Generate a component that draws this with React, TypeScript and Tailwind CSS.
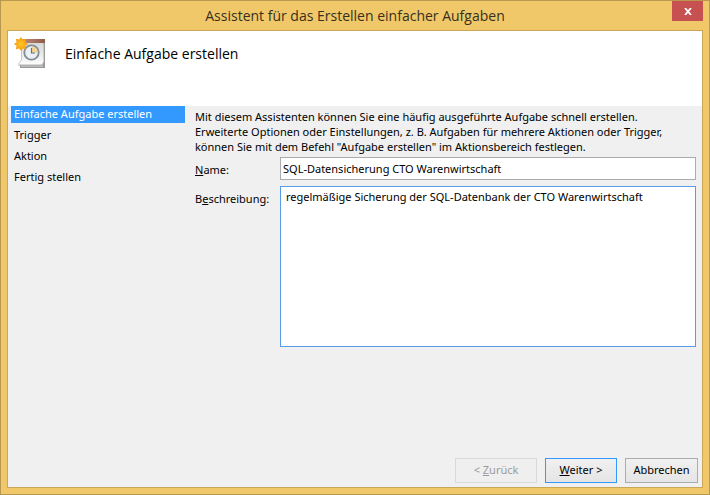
import React from "react";

const steps = ["Einfache Aufgabe erstellen", "Trigger", "Aktion", "Fertig stellen"];

function TaskIcon() {
  return (
    <svg width="32" height="32" viewBox="0 0 32 32" aria-hidden="true">
      <defs>
        <linearGradient id="sheet" x1="0" y1="0" x2="0" y2="1">
          <stop offset="0" stopColor="#d6d6d4" />
          <stop offset="0.6" stopColor="#ececeb" />
          <stop offset="1" stopColor="#ffffff" />
        </linearGradient>
        <linearGradient id="bar" x1="0" y1="0" x2="1" y2="0">
          <stop offset="0" stopColor="#c08d7b" />
          <stop offset="1" stopColor="#8f5a49" />
        </linearGradient>
        <radialGradient id="star">
          <stop offset="0" stopColor="#ffc928" />
          <stop offset="1" stopColor="#f5980c" />
        </radialGradient>
      </defs>
      <path d="M6 26H29V6H31V31H6Z" fill="#999999" />
      <path d="M7 27H29V30H7Z" fill="#bdbdbd" />
      <path d="M8 5H30V25L28 28H4L7 24Z" fill="url(#sheet)" />
      <path d="M4 28H28L30 25V6" fill="none" stroke="#a0a0a0" strokeWidth="0.800" />
      <path d="M4.500 27L7.500 23V12" fill="none" stroke="#bcbcbc" strokeWidth="0.800" />
      <path d="M8 2H31V6H8Z" fill="url(#bar)" />
      <circle cx="17.500" cy="15.500" r="7.200" fill="#edf1f4" stroke="#858d94" strokeWidth="1.800" />
      <path d="M17.500 15.500V9.500A6 6 0 0 1 23.500 15.500Z" fill="#f8d488" />
      <circle cx="17.500" cy="15.500" r="5.700" fill="none" stroke="#c9d1d7" strokeWidth="0.700" strokeDasharray="1 2" />
      <path d="M17.500 11V16H21" fill="none" stroke="#5f7488" strokeWidth="1.200" />
      <path
        d="M7 0L8.700 2.600L12.200 1.800L11.400 5.200L14 7L11.400 8.800L12.200 12.200L8.800 11.400L7 14L5.200 11.400L1.800 12.200L2.600 8.800L0 7L2.600 5.200L1.800 1.800L5.200 2.600Z"
        fill="url(#star)"
      />
    </svg>
  );
}

export default function App() {
  return (
    <div className="flex min-h-screen flex-col border border-[#b8984f] bg-[#f0c869] px-[6px] pb-[6px] font-['Noto_Sans','Open_Sans',sans-serif] text-[11px] text-black">
      <header className="grid h-[29px] grid-cols-[31px_1fr_31px] items-start font-['Open_Sans','Noto_Sans',sans-serif]">
        <h1 className="col-start-2 pt-[4px] text-center text-sm leading-[22px] text-[#38301c]">
          Assistent für das Erstellen einfacher Aufgaben
        </h1>
        <button type="button" aria-label="Schließen" className="flex h-5 w-[31px] items-center justify-center bg-[#c75050]">
          <svg width="8" height="7" viewBox="0 0 8 7" aria-hidden="true">
            <path d="M1 0L7 7M7 0L1 7" stroke="#ffffff" strokeWidth="1.800" />
          </svg>
        </button>
      </header>

      <main className="flex flex-1 flex-col border border-[#c9a658] bg-[#f0f0f0]">
        <div className="flex h-[75px] gap-[19px] bg-white pt-[6px] pl-[6px]">
          <TaskIcon />
          <h2 className="pt-[6px] font-['Open_Sans','Noto_Sans',sans-serif] text-sm leading-[22px]">
            Einfache Aufgabe erstellen
          </h2>
        </div>

        <div className="flex flex-1 gap-[10px] pr-[6px] pl-[3px]">
          <nav className="w-[174px] shrink-0">
            <ol className="flex flex-col gap-1">
              {steps.map((step, i) => (
                <li
                  key={step}
                  aria-current={i === 0 ? "step" : undefined}
                  className={
                    i === 0
                      ? "bg-[#3399ff] px-[3px] pb-[2px] leading-[15px] text-white"
                      : "px-[3px] pb-[2px] leading-[15px]"
                  }
                >
                  {step}
                </li>
              ))}
            </ol>
          </nav>

          <form className="min-w-0 flex-1 pt-[3px]">
            <p className="leading-[15px]">
              Mit diesem Assistenten können Sie eine häufig ausgeführte Aufgabe schnell erstellen.
              <br />
              Erweiterte Optionen oder Einstellungen, z. B. Aufgaben für mehrere Aktionen oder Trigger,
              <br />
              können Sie mit dem Befehl "Aufgabe erstellen" im Aktionsbereich festlegen.
            </p>
            <div className="mt-[3px] grid grid-cols-[85px_1fr] gap-y-[6px]">
              <label htmlFor="name" className="pt-[5px] leading-4">
                <u>N</u>ame:
              </label>
              <input
                id="name"
                type="text"
                defaultValue="SQL-Datensicherung CTO Warenwirtschaft"
                className="h-[23px] min-w-0 border border-[#ababab] bg-white px-[2px] outline-none"
              />
              <label htmlFor="description" className="pt-[5px] leading-4">
                B<u>e</u>schreibung:
              </label>
              <textarea
                id="description"
                defaultValue="regelmäßige Sicherung der SQL-Datenbank der CTO Warenwirtschaft"
                className="h-[161px] min-w-0 resize-none border border-[#569de5] bg-white px-[5px] py-[2px] leading-4 outline-none"
              />
            </div>
          </form>
        </div>

        <footer className="flex justify-end gap-2 pr-1 pb-1">
          <button type="button" disabled className="h-[25px] w-[82px] border border-[#d9d9d9] bg-[#efefef] text-[#9b9b9b]">
            &lt; <u>Z</u>urück
          </button>
          <button type="button" className="h-[25px] w-[72px] border border-[#3399ff] bg-linear-to-b from-[#f0f0f0] to-[#e5e5e5]">
            <u>W</u>eiter &gt;
          </button>
          <button type="button" className="h-[25px] w-[73px] border border-[#acacac] bg-linear-to-b from-[#f0f0f0] to-[#e5e5e5]">
            Abbrechen
          </button>
        </footer>
      </main>
    </div>
  );
}
